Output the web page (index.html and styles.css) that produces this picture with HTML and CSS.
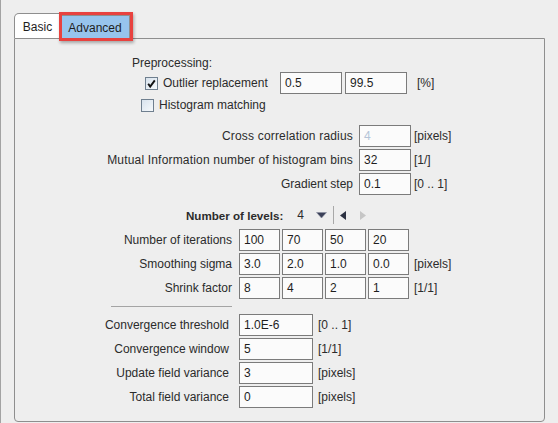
FILE: index.html
```html
<!DOCTYPE html>
<html>
<head>
<meta charset="utf-8">
<link rel="stylesheet" href="styles.css">
</head>
<body>
<div class="window">
  <div class="tabs">
    <div class="tab tab-basic">Basic</div>
    <div class="tab tab-adv">Advanced</div>
    <div class="annot"></div>
  </div>
  <div class="panel">
    <div class="pre-title">Preprocessing:</div>
    <div class="row-outlier">
      <div class="check">
        <svg class="box" width="13" height="13" viewBox="0 0 13 13"><defs><linearGradient id="cg" x1="0" y1="0" x2="1" y2="1"><stop offset="0" stop-color="#d6e1ec"/><stop offset="1" stop-color="#f7fafc"/></linearGradient></defs><rect x="0.5" y="0.5" width="12" height="12" fill="url(#cg)" stroke="#6f7f8f"/><path d="M3.2 6.8 L5.2 9.6 L9.8 3.4" fill="none" stroke="#111" stroke-width="1.9"/></svg>
        <span>Outlier replacement</span>
      </div>
      <span class="field">0.5</span>
      <span class="field">99.5</span>
      <span class="unit">[%]</span>
    </div>
    <div class="row-hist">
      <svg class="box" width="13" height="13" viewBox="0 0 13 13"><defs><linearGradient id="cg2" x1="0" y1="0" x2="1" y2="1"><stop offset="0" stop-color="#d6e1ec"/><stop offset="1" stop-color="#f7fafc"/></linearGradient></defs><rect x="0.5" y="0.5" width="12" height="12" fill="url(#cg2)" stroke="#6f7f8f"/></svg>
      <span>Histogram matching</span>
    </div>

    <div class="g2">
      <span class="lbl wide">Cross correlation radius</span><span class="field disabled">4</span><span class="unit">[pixels]</span>
      <span class="lbl wide">Mutual Information number of histogram bins</span><span class="field">32</span><span class="unit">[1/]</span>
      <span class="lbl">Gradient step</span><span class="field">0.1</span><span class="unit">[0 .. 1]</span>
    </div>

    <div class="levels">
      <b>Number of levels:</b>
      <span class="lv-val">4</span>
      <svg class="tri-down" width="11" height="7" viewBox="0 0 11 7"><polygon points="0.5,0.5 10.5,0.5 5.5,6" fill="#3b4058" stroke="#8a8fa0" stroke-width="0.6"/></svg>
      <span class="vsep"></span>
      <svg class="tri-left" width="6" height="9" viewBox="0 0 6 9"><polygon points="6,0 6,9 0,4.5" fill="#2c3142"/></svg>
      <svg class="tri-right" width="6" height="9" viewBox="0 0 6 9"><polygon points="0,0 0,9 6,4.5" fill="#c6c6c6"/></svg>
    </div>

    <div class="g3">
      <span class="lbl">Number of iterations</span><span class="field">100</span><span class="field">70</span><span class="field">50</span><span class="field">20</span><span class="unit"></span>
      <span class="lbl">Smoothing sigma</span><span class="field">3.0</span><span class="field">2.0</span><span class="field">1.0</span><span class="field">0.0</span><span class="unit">[pixels]</span>
      <span class="lbl">Shrink factor</span><span class="field">8</span><span class="field">4</span><span class="field">2</span><span class="field">1</span><span class="unit">[1/1]</span>
    </div>

    <div class="sep"></div>

    <div class="g4">
      <span class="lbl">Convergence threshold</span><span class="field">1.0E-6</span><span class="unit">[0 .. 1]</span>
      <span class="lbl">Convergence window</span><span class="field">5</span><span class="unit">[1/1]</span>
      <span class="lbl">Update field variance</span><span class="field">3</span><span class="unit">[pixels]</span>
      <span class="lbl">Total field variance</span><span class="field">0</span><span class="unit">[pixels]</span>
    </div>
  </div>
</div>
</body>
</html>
```

FILE: styles.css
```css
* { box-sizing: border-box; }

html, body {
  margin: 0;
  background: #eeeeee;
}

body {
  font-family: "Liberation Sans", Arial, sans-serif;
  font-size: 12px;
  color: #2b2b2b;
  overflow: hidden;
}

.window {
  height: 423px;
  padding-top: 13px;
  border-left: 1px solid #a3a3a3;
}

.tabs {
  position: relative;
  display: flex;
  align-items: flex-end;
  height: 25px;
  margin-left: 13px;
}

.tab {
  display: flex;
  align-items: center;
  justify-content: center;
  color: #1e1e1e;
}

.tab-basic {
  width: 47px;
  height: 25px;
  background: #ffffff;
  border: 1px solid #8e8e8e;
  border-bottom: none;
  border-radius: 5px 0 0 0;
  padding-top: 1px;
}

.tab-adv {
  width: 69px;
  height: 23px;
  background: #97c4ed;
  border: 1px solid #8e8e8e;
  border-left: none;
  border-bottom: none;
  padding-top: 1px;
}

.annot {
  position: absolute;
  left: 45px;
  top: -1px;
  width: 74px;
  height: 29px;
  border: 3px solid #e8423f;
  box-shadow: 1px 2px 3px rgba(0, 0, 0, 0.3);
}

.panel {
  margin-left: 13px;
  width: 531px;
  height: 384px;
  border: 1px solid #8e8e8e;
  border-radius: 0 0 4px 4px;
  padding-top: 16px;
}

.pre-title {
  margin-left: 117px;
  height: 16px;
  line-height: 16px;
}

.row-outlier {
  display: grid;
  grid-template-columns: 262px 62px 62px auto;
  column-gap: 3px;
  align-items: center;
  height: 22px;
  margin-top: 1px;
}

.check {
  display: flex;
  align-items: center;
  gap: 5px;
  padding-left: 130px;
}

.row-outlier .unit {
  padding-left: 7px;
}

.row-hist {
  display: flex;
  align-items: center;
  gap: 5px;
  height: 22px;
  padding-left: 126px;
}

.box {
  display: block;
  flex: none;
}

.field {
  display: block;
  height: 22px;
  border: 1px solid #7b7b7b;
  background: #fbfbfb;
  padding: 0 4px;
  line-height: 20px;
  color: #1e1e1e;
  white-space: nowrap;
}

.field.disabled {
  color: #b4c4d8;
}

.lbl {
  text-align: right;
  line-height: 22px;
  white-space: nowrap;
}

.lbl.wide {
  letter-spacing: 0.18px;
}

.unit {
  line-height: 22px;
  white-space: nowrap;
}

.g2 {
  display: grid;
  grid-template-columns: 344px 52px auto;
  row-gap: 2px;
  margin-top: 9px;
}

.g2 .lbl { padding-right: 6px; }
.g2 .unit { padding-left: 3px; }

.levels {
  display: flex;
  align-items: center;
  height: 22px;
  margin-top: 9px;
  padding-left: 171px;
}

.levels b {
  font-weight: bold;
  font-size: 11.6px;
}

.lv-val {
  margin-left: 14px;
}

.tri-down {
  display: block;
  margin-left: 12px;
}

.vsep {
  display: block;
  width: 1px;
  height: 18px;
  margin-left: 6px;
  background: #a8a8a8;
}

.tri-left {
  display: block;
  margin-left: 6px;
}

.tri-right {
  display: block;
  margin-left: 14px;
}

.g3 {
  display: grid;
  grid-template-columns: 222px repeat(4, 41px) auto;
  column-gap: 2px;
  row-gap: 2px;
  margin-top: 3px;
}

.g3 .lbl { padding-right: 5px; }
.g3 .unit { padding-left: 3px; }

.sep {
  width: 121px;
  height: 1px;
  margin: 7px 0 7px 96px;
  background: #a4a4a4;
}

.g4 {
  display: grid;
  grid-template-columns: 224px 74px auto;
  row-gap: 2px;
}

.g4 .lbl { padding-right: 10px; }
.g4 .unit { padding-left: 5px; }
```
